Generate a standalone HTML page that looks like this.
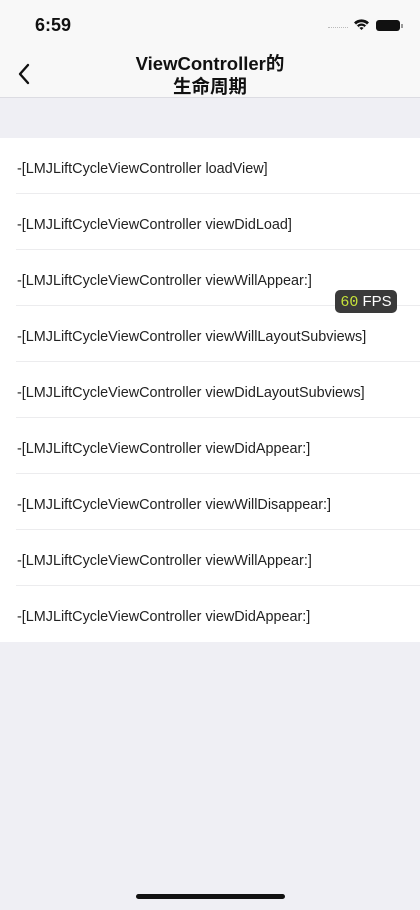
<!DOCTYPE html>
<html><head><meta charset="utf-8"><style>
*{margin:0;padding:0;box-sizing:border-box}
body{width:420px;height:910px;background:#efeff4;font-family:"Liberation Sans","Noto Sans CJK SC",sans-serif;position:relative;overflow:hidden}
.status{position:absolute;top:0;left:0;width:420px;height:98px;background:#f8f8f8}
.time{position:absolute;left:35px;top:15px;font-size:18px;font-weight:bold;color:#111}
.title{position:absolute;left:0;width:420px;top:52px;text-align:center;font-size:18.5px;font-weight:bold;line-height:23px;color:#111}
.navline{position:absolute;top:97px;left:0;width:420px;height:1px;background:#dcdce2}
.list{position:absolute;top:138px;left:0;width:420px;background:#fff}
.row{height:56px;position:relative;font-size:14.4px;color:#222;padding-left:17px;padding-top:3px;line-height:56px;white-space:nowrap}
.row:after{content:"";position:absolute;left:16px;right:0;bottom:0;height:1px;background:#ececee}
.row:last-child:after{display:none}
.fps{position:absolute;left:335px;top:290px;width:62px;height:23px;background:#3a3a3a;border-radius:5px;font-size:15px;line-height:23px;text-align:center;color:#fff}
.fps b{color:#c6e23a;font-weight:normal;font-family:"Liberation Mono",monospace}
.home{position:absolute;left:136px;top:894px;width:149px;height:5px;border-radius:3px;background:#111}
</style></head><body>
<div class="status">
<div class="time">6:59</div>
<div style="position:absolute;left:328px;top:27px;width:20px;height:2px;border-top:1px dotted #bbb"></div>
<svg style="position:absolute;left:353px;top:18px" width="17" height="13" viewBox="0 0 17 13"><path d="M8.5 12 L1 4.5 A10.5 10.5 0 0 1 16 4.5 Z" fill="#111"/><path d="M3.5 7 A7 7 0 0 1 13.5 7" stroke="#f8f8f8" stroke-width="1.3" fill="none"/><path d="M6 9.5 A3.5 3.5 0 0 1 11 9.5" stroke="#f8f8f8" stroke-width="1.3" fill="none"/></svg>
<div style="position:absolute;left:376px;top:20px;width:24px;height:11px;border-radius:3px;background:#111"></div>
<div style="position:absolute;left:401px;top:24px;width:2px;height:4px;background:#999"></div>
<svg style="position:absolute;left:17px;top:63px" width="14" height="22" viewBox="0 0 14 22"><path d="M11 2 L3 11 L11 20" stroke="#111" stroke-width="2.4" fill="none" stroke-linecap="round" stroke-linejoin="round"/></svg>
<div class="title">ViewController的<br>生命周期</div>
</div>
<div class="navline"></div>
<div class="list">
<div class="row">-[LMJLiftCycleViewController loadView]</div>
<div class="row">-[LMJLiftCycleViewController viewDidLoad]</div>
<div class="row">-[LMJLiftCycleViewController viewWillAppear:]</div>
<div class="row">-[LMJLiftCycleViewController viewWillLayoutSubviews]</div>
<div class="row">-[LMJLiftCycleViewController viewDidLayoutSubviews]</div>
<div class="row">-[LMJLiftCycleViewController viewDidAppear:]</div>
<div class="row">-[LMJLiftCycleViewController viewWillDisappear:]</div>
<div class="row">-[LMJLiftCycleViewController viewWillAppear:]</div>
<div class="row">-[LMJLiftCycleViewController viewDidAppear:]</div>
</div>
<div class="fps"><b>60</b> FPS</div>
<div class="home"></div>
</body></html>
